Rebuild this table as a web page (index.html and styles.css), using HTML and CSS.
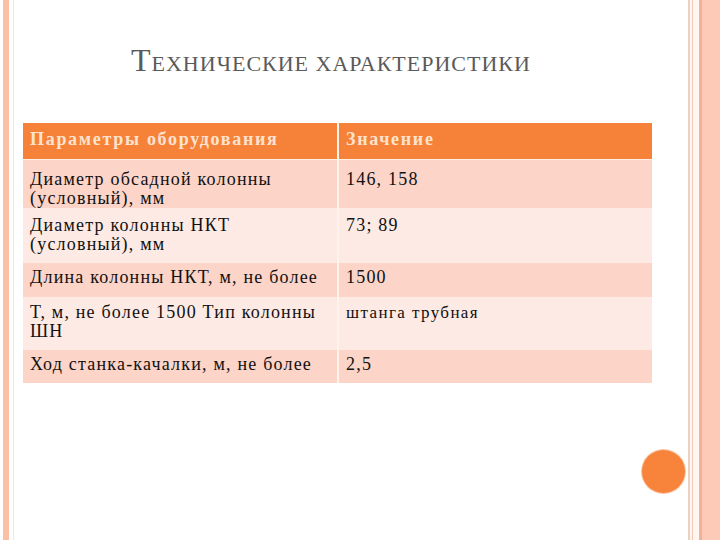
FILE: index.html
```html
<!DOCTYPE html>
<html lang="ru">
<head>
<meta charset="utf-8">
<link rel="stylesheet" href="styles.css">
</head>
<body>
<div class="slide">
  <h1 class="title"><span class="cap">Т</span>ЕХНИЧЕСКИЕ ХАРАКТЕРИСТИКИ</h1>
  <table class="specs">
    <thead>
      <tr><th>Параметры оборудования</th><th>Значение</th></tr>
    </thead>
    <tbody>
      <tr class="odd r1"><td>Диаметр обсадной колонны (условный), мм</td><td>146, 158</td></tr>
      <tr class="even r2"><td>Диаметр колонны НКТ (условный), мм</td><td>73; 89</td></tr>
      <tr class="odd r3"><td>Длина колонны НКТ, м, не более</td><td>1500</td></tr>
      <tr class="even r4"><td>Т, м, не более 1500 Тип колонны ШН</td><td class="small">штанга трубная</td></tr>
      <tr class="odd r5"><td>Ход станка-качалки, м, не более</td><td>2,5</td></tr>
    </tbody>
  </table>
  <div class="dot"></div>
</div>
</body>
</html>
```

FILE: styles.css
```css
html, body {
  margin: 0;
  padding: 0;
  background: #ffffff;
}
.slide {
  position: relative;
  width: 720px;
  height: 540px;
  box-sizing: border-box;
  padding: 40px 68px 0 23px;
  background:
    linear-gradient(to right,
      #ffffff 0, #ffffff 3px,
      #fcbea4 3px, #fcbea4 9px,
      #ffffff 9px, #ffffff 13px,
      #f7e6d8 13px, #f7e6d8 14px,
      #ffffff 14px, #ffffff 688px,
      #ead2c2 688px, #ead2c2 690px,
      #fff4ee 690px, #fff4ee 692px,
      #f2c9b6 692px, #f2c9b6 693px,
      #fff6f1 693px, #fff6f1 699px,
      #f3b19c 699px, #f3b19c 702px,
      #fdcab8 702px, #fdcab8 720px);
  font-family: "Liberation Serif", serif;
}
.title {
  margin: 0 0 43px 108px;
  height: 40px;
  font-family: "Liberation Serif", serif;
  font-weight: normal;
  font-size: 22px;
  letter-spacing: 1px;
  color: #5a5a5a;
  line-height: 40px;
  white-space: nowrap;
}
.title .cap {
  font-size: 32px;
}
.specs {
  width: 629px;
  border-collapse: collapse;
  table-layout: fixed;
  font-family: "Liberation Serif", serif;
  font-size: 18px;
  letter-spacing: 1.2px;
  color: #111111;
}
.specs th, .specs td {
  text-align: left;
  vertical-align: top;
  padding: 0 4px 0 7px;
  line-height: 19px;
}
.specs th:first-child, .specs td:first-child {
  width: 303px;
  border-right: 2px solid #fff4ec;
}
.specs thead tr { height: 36px; }
.specs th {
  background: #f6823a;
  color: #fde3cf;
  font-weight: bold;
  letter-spacing: 1.7px;
  padding-top: 7px;
  border-bottom: 1px solid #fff0e6;
}
.specs .odd td { background: #fcd4c8; }
.specs .even td { background: #fdeae4; }
.specs tr.r1 { height: 49px; }
.specs tr.r2 { height: 55px; }
.specs tr.r3 { height: 34px; }
.specs tr.r4 { height: 53px; }
.specs tr.r5 { height: 33px; }
.specs tr.r1 td { padding-top: 10px; }
.specs tr.r2 td { padding-top: 8px; }
.specs tr.r3 td { padding-top: 5px; }
.specs tr.r4 td { padding-top: 6px; }
.specs tr.r5 td { padding-top: 5px; }
.specs td.small {
  font-size: 17px;
  letter-spacing: 1.4px;
}
.dot {
  position: absolute;
  left: 642px;
  top: 450px;
  width: 43px;
  height: 43px;
  border-radius: 50%;
  background: #f7843a;
  box-shadow: 0 0 0 1px #f9c7a8;
}
```
